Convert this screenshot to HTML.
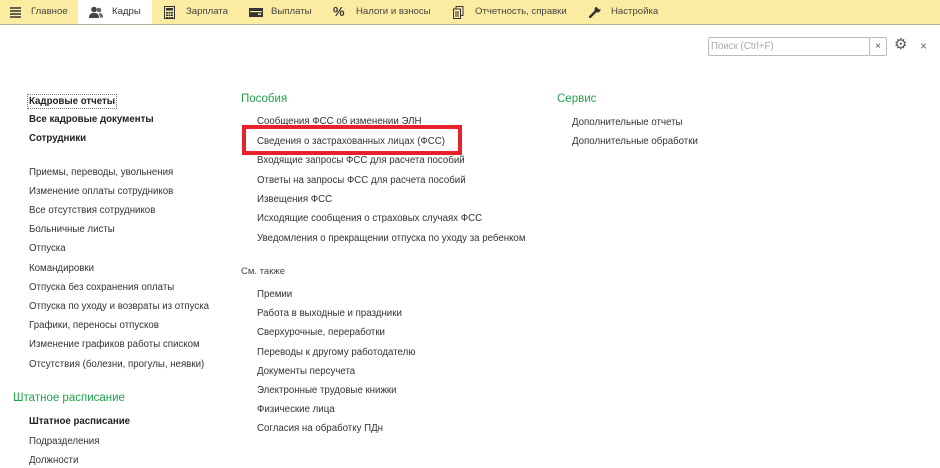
<!DOCTYPE html>
<html><head><meta charset="utf-8"><style>
*{margin:0;padding:0;box-sizing:border-box}
body{width:940px;height:468px;overflow:hidden;background:#fff;font-family:"Liberation Sans",Arial,sans-serif;font-size:9.7px;color:#333;position:relative}
.nav{position:absolute;left:0;top:0;width:940px;height:25px;background:#fbeca1;border-bottom:1px solid #b5b09a}
.tab{position:absolute;top:0;height:24px;line-height:24px;font-size:9.6px;color:#444}
.act{background:#fff}
.t{position:absolute;white-space:nowrap;line-height:13px}
.b{font-weight:bold;color:#222}
.h{color:#1fa24a;font-size:11.5px}
.ic{position:absolute;top:6px}
</style></head><body>
<div class="nav">
 <div class="tab act" style="left:78px;width:74px"></div>
 <svg class="ic" style="left:9px" width="13" height="13"><path d="M1 2h11M1 5h11M1 8h11M1 11h11" stroke="#333" stroke-width="1.5"/></svg>
 <div class="tab" style="left:31px">Главное</div>
 <svg class="ic" style="left:88px" width="16" height="13"><circle cx="6" cy="3.5" r="2.8" fill="#444"/><path d="M1 12c0-4 2-5 5-5s5 1 5 5z" fill="#444"/><circle cx="11" cy="4" r="2.3" fill="#666"/><path d="M11 7c3 0 4 1.5 4 4.5h-3z" fill="#666"/></svg>
 <div class="tab" style="left:112px;color:#333">Кадры</div>
 <svg class="ic" style="left:164px" width="11" height="13"><rect x="0.5" y="0.5" width="10" height="12" fill="none" stroke="#333"/><rect x="2" y="2" width="7" height="2.5" fill="#333"/><path d="M2 6h2v1.5H2zM4.5 6h2v1.5h-2zM7 6h2v1.5H7zM2 8.5h2V10H2zM4.5 8.5h2V10h-2zM7 8.5h2V10H7zM2 11h2v1H2zM4.5 11h2v1h-2zM7 11h2v1H7z" fill="#333"/></svg>
 <div class="tab" style="left:186px">Зарплата</div>
 <svg class="ic" style="left:249px;top:8px" width="14" height="9"><rect x="0" y="0" width="14" height="9" fill="#333"/><rect x="1" y="3" width="12" height="1.2" fill="#fbeca1"/><rect x="9" y="5.5" width="3" height="1.5" fill="#fbeca1"/></svg>
 <div class="tab" style="left:271px">Выплаты</div>
 <div class="tab" style="left:333px;font-weight:bold;font-size:13px;color:#333">%</div>
 <div class="tab" style="left:356px">Налоги и взносы</div>
 <svg class="ic" style="left:453px" width="11" height="13"><rect x="3" y="0.5" width="7" height="9" fill="none" stroke="#333"/><rect x="0.5" y="3" width="7" height="9.5" fill="#fbeca1" stroke="#333"/><path d="M2 6h4M2 8h4M2 10h4" stroke="#333"/></svg>
 <div class="tab" style="left:475px">Отчетность, справки</div>
 <svg class="ic" style="left:589px" width="12" height="12"><path d="M1 11l6-6" stroke="#333" stroke-width="2.5" stroke-linecap="round"/><circle cx="8.5" cy="3.5" r="3" fill="#333"/><path d="M8 0l3 3" stroke="#fbeca1" stroke-width="2"/></svg>
 <div class="tab" style="left:611px">Настройка</div>
</div>
<div style="position:absolute;left:708px;top:37px;width:162px;height:19px;border:1px solid #bbb;border-radius:2px"></div>
<div class="t" style="left:711px;top:40px;color:#aaa">Поиск (Ctrl+F)</div>
<div style="position:absolute;left:869px;top:37px;width:18px;height:19px;border:1px solid #bbb;border-radius:2px;text-align:center;line-height:17px;font-size:10px;color:#555">×</div>
<div class="t" style="left:894px;top:38px;font-size:15px;color:#555">⚙</div>
<div class="t" style="left:920px;top:40px;font-size:12px;color:#666">×</div>

<div class="t b" style="left:27px;top:94px;border:1px dotted #777;padding:0 1px">Кадровые отчеты</div>
<div class="t b" style="left:29px;top:113px">Все кадровые документы</div>
<div class="t b" style="left:29px;top:132px">Сотрудники</div>
<div class="t" style="left:29px;top:166px">Приемы, переводы, увольнения</div>
<div class="t" style="left:29px;top:185px">Изменение оплаты сотрудников</div>
<div class="t" style="left:29px;top:204px">Все отсутствия сотрудников</div>
<div class="t" style="left:29px;top:223px">Больничные листы</div>
<div class="t" style="left:29px;top:242px">Отпуска</div>
<div class="t" style="left:29px;top:262px">Командировки</div>
<div class="t" style="left:29px;top:281px">Отпуска без сохранения оплаты</div>
<div class="t" style="left:29px;top:300px">Отпуска по уходу и возвраты из отпуска</div>
<div class="t" style="left:29px;top:319px">Графики, переносы отпусков</div>
<div class="t" style="left:29px;top:338px">Изменение графиков работы списком</div>
<div class="t" style="left:29px;top:358px">Отсутствия (болезни, прогулы, неявки)</div>
<div class="t h" style="left:13px;top:392px">Штатное расписание</div>
<div class="t b" style="left:29px;top:415px">Штатное расписание</div>
<div class="t" style="left:29px;top:435px">Подразделения</div>
<div class="t" style="left:29px;top:454px">Должности</div>

<div class="t h" style="left:241px;top:93px">Пособия</div>
<div class="t" style="left:257px;top:115px">Сообщения ФСС об изменении ЭЛН</div>
<div class="t" style="left:257px;top:135px">Сведения о застрахованных лицах (ФСС)</div>
<div style="position:absolute;left:242px;top:125px;width:220px;height:30px;border:4px solid #e8202a"></div>
<div class="t" style="left:257px;top:154px">Входящие запросы ФСС для расчета пособий</div>
<div class="t" style="left:257px;top:174px">Ответы на запросы ФСС для расчета пособий</div>
<div class="t" style="left:257px;top:193px">Извещения ФСС</div>
<div class="t" style="left:257px;top:212px">Исходящие сообщения о страховых случаях ФСС</div>
<div class="t" style="left:257px;top:232px">Уведомления о прекращении отпуска по уходу за ребенком</div>
<div class="t" style="left:241px;top:265px;font-size:9.5px;color:#444">См. также</div>
<div class="t" style="left:257px;top:288px">Премии</div>
<div class="t" style="left:257px;top:307px">Работа в выходные и праздники</div>
<div class="t" style="left:257px;top:326px">Сверхурочные, переработки</div>
<div class="t" style="left:257px;top:346px">Переводы к другому работодателю</div>
<div class="t" style="left:257px;top:365px">Документы персучета</div>
<div class="t" style="left:257px;top:384px">Электронные трудовые книжки</div>
<div class="t" style="left:257px;top:403px">Физические лица</div>
<div class="t" style="left:257px;top:422px">Согласия на обработку ПДн</div>

<div class="t h" style="left:557px;top:93px">Сервис</div>
<div class="t" style="left:572px;top:116px">Дополнительные отчеты</div>
<div class="t" style="left:572px;top:135px">Дополнительные обработки</div>
</body></html>
